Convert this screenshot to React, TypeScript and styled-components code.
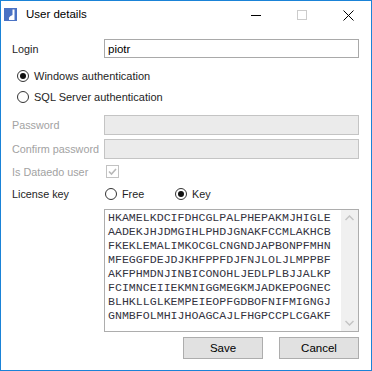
import React from "react";
import styled, { createGlobalStyle } from "styled-components";

const GlobalStyle = createGlobalStyle`
  html, body {
    margin: 0;
    padding: 0;
    background: #fff;
  }
  body {
    font-family: "Liberation Sans", Arial, sans-serif;
    font-size: 10.8px;
    color: #1e1e1e;
  }
`;

const Window = styled.div`
  width: 372px;
  height: 371px;
  box-sizing: border-box;
  border: 1px solid #1a83d7;
  background: #fff;
  display: flex;
  flex-direction: column;
`;

const TitleBar = styled.div`
  height: 30px;
  display: flex;
  align-items: center;
  flex-shrink: 0;
`;

const TitleIcon = styled.svg`
  margin-left: 3px;
  margin-top: -4px;
  flex-shrink: 0;
`;

const TitleText = styled.span`
  margin-left: 9px;
  margin-top: -5px;
  font-size: 11.5px;
  color: #000;
  flex: 1;
`;

const CaptionButton = styled.div`
  width: 46px;
  height: 30px;
  display: flex;
  align-items: center;
  justify-content: center;
  margin-top: -2px;
`;

const Form = styled.div`
  padding: 8px 12px 0 11px;
  display: flex;
  flex-direction: column;
`;

const Row = styled.div<{ $h: number; $mt?: number }>`
  display: flex;
  align-items: center;
  height: ${(p) => p.$h}px;
  margin-top: ${(p) => p.$mt ?? 0}px;
`;

const Label = styled.div<{ $disabled?: boolean }>`
  width: 92px;
  flex-shrink: 0;
  color: ${(p) => (p.$disabled ? "#a2a2a2" : "#1e1e1e")};
`;

const Input = styled.div<{ $disabled?: boolean }>`
  flex: 1;
  height: 100%;
  box-sizing: border-box;
  border: 1px solid ${(p) => (p.$disabled ? "#c4c4c4" : "#a9a9a9")};
  background: ${(p) => (p.$disabled ? "#ebebeb" : "#fff")};
  padding: 0 3px;
  display: flex;
  align-items: center;
  font-size: 11.5px;
  color: #000;
`;

const RadioOption = styled.label<{ $w?: number }>`
  display: flex;
  align-items: center;
  gap: 5px;
  width: ${(p) => (p.$w ? `${p.$w}px` : "auto")};
  color: #1e1e1e;
`;

const RadioCircle = styled.span<{ $checked?: boolean }>`
  width: 12px;
  height: 12px;
  box-sizing: border-box;
  border: 1px solid #333;
  border-radius: 50%;
  background: #fff;
  display: flex;
  align-items: center;
  justify-content: center;
  &::after {
    content: "";
    width: 6px;
    height: 6px;
    border-radius: 50%;
    background: ${(p) => (p.$checked ? "#111" : "transparent")};
  }
`;

const RadioGroup = styled.div`
  padding-left: 5px;
  margin-top: 7px;
  display: flex;
  flex-direction: column;
  font-size: 11px;
`;

const CheckBox = styled.span`
  width: 13px;
  height: 13px;
  box-sizing: border-box;
  border: 1px solid #c2c2c2;
  background: #fff;
  margin-left: 2px;
  display: flex;
  align-items: center;
  justify-content: center;
`;

const LicenseBox = styled.div`
  margin-left: 92px;
  margin-top: 6px;
  height: 123px;
  box-sizing: border-box;
  border: 1px solid #adadad;
  display: flex;
`;

const LicenseText = styled.div`
  flex: 1;
  padding: 1px 0 0 3px;
  font-family: "Liberation Mono", "Courier New", monospace;
  font-size: 11.6px;
  line-height: 14px;
  color: #34343f;
  white-space: pre;
  overflow: hidden;
`;

const ScrollBar = styled.div`
  width: 17px;
  background: #f0f0f0;
  display: flex;
  flex-direction: column;
  justify-content: space-between;
  align-items: center;
  padding: 5px 0;
`;

const ButtonRow = styled.div`
  display: flex;
  justify-content: flex-end;
  gap: 16px;
  margin-top: 5px;
`;

const Button = styled.button`
  width: 80px;
  height: 22px;
  box-sizing: border-box;
  border: 1px solid #adadad;
  background: #e1e1e1;
  font-family: "Liberation Sans", Arial, sans-serif;
  font-size: 11.5px;
  color: #000;
  padding: 0;
`;

const licenseLines = [
  "HKAMELKDCIFDHCGLPALPHEPAKMJHIGLE",
  "AADEKJHJDMGIHLPHDJGNAKFCCMLAKHCB",
  "FKEKLEMALIMKOCGLCNGNDJAPBONPFMHN",
  "MFEGGFDEJDJKHFPPFDJFNJLOLJLMPPBF",
  "AKFPHMDNJINBICONOHLJEDLPLBJJALKP",
  "FCIMNCEIIEKMNIGGMEGKMJADKEPOGNEC",
  "BLHKLLGLKEMPEIEOPFGDBOFNIFMIGNGJ",
  "GNMBFOLMHIJHOAGCAJLFHGPCCPLCGAKF",
];

const Radio = ({ checked, children, width }: { checked?: boolean; children: React.ReactNode; width?: number }) => (
  <RadioOption $w={width}>
    <RadioCircle $checked={checked} />
    {children}
  </RadioOption>
);

export default function App() {
  return (
    <>
      <GlobalStyle />
      <Window>
        <TitleBar>
          <TitleIcon width="13" height="13" viewBox="0 0 13 13">
            <rect width="13" height="13" fill="#4a72c4" />
            <path d="M8.5 1.5 L10.5 1.5 L10.5 12 L5 12 Q4.3 9.5 6.2 8.2 L8.5 7 Z" fill="#fff" />
          </TitleIcon>
          <TitleText>User details</TitleText>
          <CaptionButton>
            <svg width="10" height="10" viewBox="0 0 10 10">
              <line x1="0" y1="5.5" x2="10" y2="5.5" stroke="#000" strokeWidth="1" />
            </svg>
          </CaptionButton>
          <CaptionButton>
            <svg width="10" height="10" viewBox="0 0 10 10">
              <rect x="0.5" y="0.5" width="9" height="9" fill="none" stroke="#cccccc" strokeWidth="1" />
            </svg>
          </CaptionButton>
          <CaptionButton>
            <svg width="11" height="11" viewBox="0 0 11 11">
              <path d="M0.5 0.5 L10.5 10.5 M10.5 0.5 L0.5 10.5" stroke="#000" strokeWidth="1" />
            </svg>
          </CaptionButton>
        </TitleBar>

        <Form>
          <Row $h={19}>
            <Label>Login</Label>
            <Input>piotr</Input>
          </Row>

          <RadioGroup>
            <Row $h={21}>
              <Radio checked>Windows authentication</Radio>
            </Row>
            <Row $h={21}>
              <Radio>SQL Server authentication</Radio>
            </Row>
          </RadioGroup>

          <Row $h={20} $mt={8}>
            <Label $disabled>Password</Label>
            <Input $disabled />
          </Row>
          <Row $h={20} $mt={4}>
            <Label $disabled>Confirm password</Label>
            <Input $disabled />
          </Row>

          <Row $h={19} $mt={3}>
            <Label $disabled>Is Dataedo user</Label>
            <CheckBox>
              <svg width="11" height="11" viewBox="0 0 11 11">
                <path d="M2 5.5 L4.5 8 L9 3" fill="none" stroke="#b8b8b8" strokeWidth="1.6" />
              </svg>
            </CheckBox>
          </Row>

          <Row $h={19} $mt={3}>
            <Label>License key</Label>
            <span style={{ width: 1 }} />
            <Radio width={70}>Free</Radio>
            <Radio checked>Key</Radio>
          </Row>

          <LicenseBox>
            <LicenseText>{licenseLines.join("\n")}</LicenseText>
            <ScrollBar>
              <svg width="9" height="6" viewBox="0 0 9 6">
                <path d="M0.5 5 L4.5 1 L8.5 5" fill="none" stroke="#c4c4c4" strokeWidth="1.5" />
              </svg>
              <svg width="9" height="6" viewBox="0 0 9 6">
                <path d="M0.5 1 L4.5 5 L8.5 1" fill="none" stroke="#c4c4c4" strokeWidth="1.5" />
              </svg>
            </ScrollBar>
          </LicenseBox>

          <ButtonRow>
            <Button>Save</Button>
            <Button>Cancel</Button>
          </ButtonRow>
        </Form>
      </Window>
    </>
  );
}
